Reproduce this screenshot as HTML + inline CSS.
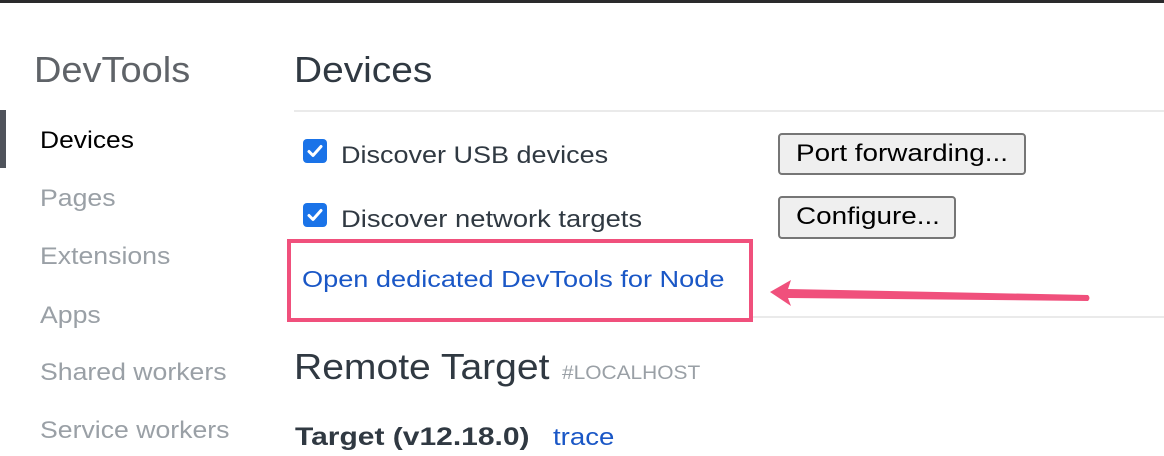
<!DOCTYPE html>
<html><head><meta charset="utf-8"><style>
body{margin:0;width:1164px;height:456px;overflow:hidden;background:#fff;font-family:"Liberation Sans",sans-serif;position:relative}
.a{position:absolute;white-space:nowrap;transform-origin:0 50%}
.side{color:#9aa0a6;font-size:24px;transform:scaleX(1.11)}
.cb{position:absolute;width:24px;height:24px;background:#1a73e8;border-radius:4px}
.cb svg{position:absolute;left:0;top:0}
.btn{position:absolute;background:#efefef;border:2px solid #767676;border-radius:4px;box-sizing:border-box;font-size:24px;color:#000;padding-left:16px;line-height:38px}
.btn span{display:inline-block;transform-origin:0 50%;transform:scaleX(1.16)}
</style></head><body>
<div class="a" style="left:0;top:0;width:1164px;height:3px;background:#2a2a2c"></div>
<div class="a" style="left:34px;top:49px;font-size:36px;color:#5f6368;transform:scaleX(1.055)">DevTools</div>
<div class="a" style="left:0;top:110px;width:6px;height:58px;background:#4f535b"></div>
<div class="a" style="left:40px;top:127px;font-size:24px;color:#000;transform:scaleX(1.1)">Devices</div>
<div class="a side" style="left:40px;top:185px">Pages</div>
<div class="a side" style="left:40px;top:243px">Extensions</div>
<div class="a side" style="left:40px;top:302px">Apps</div>
<div class="a side" style="left:40px;top:359px">Shared workers</div>
<div class="a side" style="left:40px;top:417px">Service workers</div>

<div class="a" style="left:294px;top:49px;font-size:36px;color:#303942;transform:scaleX(1.08)">Devices</div>
<div class="a" style="left:294px;top:110px;width:870px;height:2px;background:#eaeaea"></div>

<div class="cb" style="left:303px;top:139px"><svg width="24" height="24"><path d="M6 12.5l4 4 8-9" stroke="#fff" stroke-width="3" fill="none" stroke-linecap="round" stroke-linejoin="round"/></svg></div>
<div class="a" style="left:341px;top:142px;font-size:24px;color:#303942;transform:scaleX(1.125)">Discover USB devices</div>
<div class="cb" style="left:303px;top:203px"><svg width="24" height="24"><path d="M6 12.5l4 4 8-9" stroke="#fff" stroke-width="3" fill="none" stroke-linecap="round" stroke-linejoin="round"/></svg></div>
<div class="a" style="left:341px;top:206px;font-size:24px;color:#303942;transform:scaleX(1.14)">Discover network targets</div>

<div class="btn" style="left:778px;top:133px;width:248px;height:42px"><span>Port forwarding...</span></div>
<div class="btn" style="left:778px;top:196px;width:178px;height:43px"><span>Configure...</span></div>

<div class="a" style="left:752px;top:316px;width:412px;height:2px;background:#eaeaea"></div>
<div class="a" style="left:287px;top:239px;width:466px;height:83px;border:4px solid #f0507c;box-sizing:border-box"></div>
<div class="a" style="left:302px;top:266px;font-size:23px;color:#1a57c6;transform:scaleX(1.18)">Open dedicated DevTools for Node</div>
<svg class="a" style="left:0;top:0" width="1164" height="456"><path d="M770 292L791 280L788 289L1088 295Q1091 298 1088 301L788 298L791 306Z" fill="#f0507c"/></svg>

<div class="a" style="left:294px;top:346px;font-size:36px;color:#303942;transform:scaleX(1.085)">Remote Target</div>
<div class="a" style="left:562px;top:363px;font-size:19px;color:#9aa0a6;transform:scaleX(1.1)">#LOCALHOST</div>
<div class="a" style="left:295px;top:423px;font-size:25px;font-weight:bold;color:#303942;transform:scaleX(1.2)">Target (v12.18.0)</div>
<div class="a" style="left:553px;top:424px;font-size:24px;color:#1a57c6;transform:scaleX(1.15)">trace</div>
</body></html>
